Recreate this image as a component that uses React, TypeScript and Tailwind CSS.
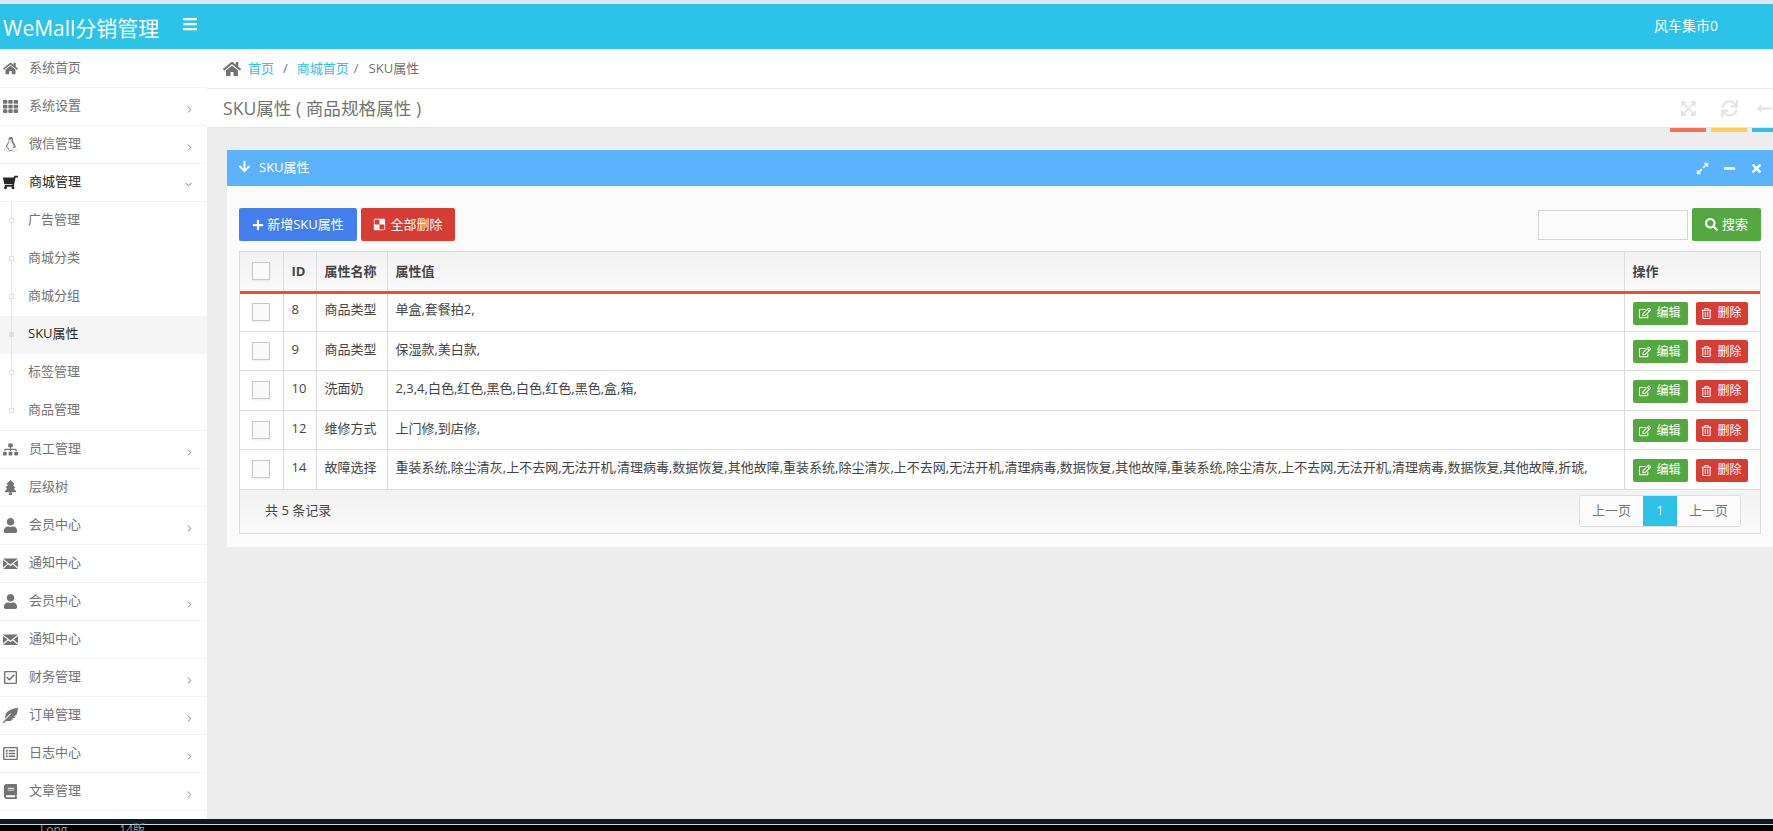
import React from 'react';
import {
  FaHome, FaTh, FaLinux, FaShoppingCart, FaSitemap, FaTree, FaUser,
  FaRegCheckSquare, FaFeatherAlt, FaRegListAlt, FaBook, FaBars, FaExpandArrowsAlt, FaSync,
  FaLongArrowAltLeft, FaArrowDown, FaExpandAlt, FaMinus, FaTimes, FaPlus, FaDelicious,
  FaSearch, FaRegEdit, FaRegTrashAlt,
} from 'react-icons/fa';
import { ChevronDown, ChevronRight } from 'lucide-react';

// closed envelope with the flap lines cut out, the icon font's shape
const MailIcon = () => (
  <svg width="15" height="11" viewBox="0 0 15 11" fill="currentColor">
    <path d="M0 0.5h15L7.5 6.5z" />
    <path d="M0 2v7.5L4.5 5.6z" />
    <path d="M15 2v7.5L10.5 5.6z" />
    <path d="M0 11h15L9.7 6.5 7.5 8.2 5.3 6.5z" />
  </svg>
);

const menuBefore = [
  { label: '系统首页', icon: FaHome, arrow: false },
  { label: '系统设置', icon: FaTh, arrow: true },
  { label: '微信管理', icon: FaLinux, arrow: true },
];

const subMenu = ['广告管理', '商城分类', '商城分组', 'SKU属性', '标签管理', '商品管理'];

const menuAfter = [
  { label: '员工管理', icon: FaSitemap, arrow: true },
  { label: '层级树', icon: FaTree, arrow: false },
  { label: '会员中心', icon: FaUser, arrow: true },
  { label: '通知中心', icon: MailIcon, arrow: false },
  { label: '会员中心', icon: FaUser, arrow: true },
  { label: '通知中心', icon: MailIcon, arrow: false },
  { label: '财务管理', icon: FaRegCheckSquare, arrow: true },
  { label: '订单管理', icon: FaFeatherAlt, arrow: true },
  { label: '日志中心', icon: FaRegListAlt, arrow: true },
  { label: '文章管理', icon: FaBook, arrow: true },
];

const rows = [
  { id: 8, name: '商品类型', value: '单盒,套餐拍2,', h: 'h-[39px]', pad: 'pb-[4px]' },
  { id: 9, name: '商品类型', value: '保湿款,美白款,', h: 'h-[39px]', pad: 'pb-[2px]' },
  { id: 10, name: '洗面奶', value: '2,3,4,白色,红色,黑色,白色,红色,黑色,盒,箱,', h: 'h-[40px]', pad: 'pb-[3px]' },
  { id: 12, name: '维修方式', value: '上门修,到店修,', h: 'h-[39px]', pad: 'pb-[2px]' },
  {
    id: 14,
    name: '故障选择',
    value:
      '重装系统,除尘清灰,上不去网,无法开机,清理病毒,数据恢复,其他故障,重装系统,除尘清灰,上不去网,无法开机,清理病毒,数据恢复,其他故障,重装系统,除尘清灰,上不去网,无法开机,清理病毒,数据恢复,其他故障,折琥,',
    h: 'h-[40px]',
    pad: 'pb-[3px]',
  },
];

const MenuRow = ({ item, active }: { item: { label: string; icon: React.ElementType; arrow: boolean }; active?: boolean }) => {
  const Icon = item.icon;
  return (
    <div className={`flex h-[38px] shrink-0 items-center border-b border-[#f3f3f3] ${active ? 'text-[#262626]' : 'text-[#737373]'}`}>
      <span className="flex w-[29px] shrink-0 justify-center pr-[9px] text-[15px]">
        <Icon />
      </span>
      <span className="pb-[2px]">{item.label}</span>
      {item.arrow && <ChevronRight size={11} strokeWidth={2} className="ml-auto mr-[12px] mt-[5px]" />}
    </div>
  );
};

const Checkbox = () => (
  <span className="block h-[18px] w-[18px] border border-[#c8c8c8] bg-[#fafafa] shadow-[0_1px_2px_rgba(0,0,0,0.08)]" />
);

export default function App() {
  return (
    <div className="flex h-[831px] flex-col overflow-hidden bg-[#ededed] font-['Open_Sans','Noto_Sans_CJK_SC',sans-serif] text-[13px]">
      <div className="h-[4px] shrink-0 bg-[#dbe7f3]" />

      {/* Header */}
      <header className="flex h-[45px] shrink-0 items-center bg-[#2dc3e8] text-white">
        <span className="ml-[3px] mt-[3px] text-[21px] leading-none">WeMall分销管理</span>
        <FaBars className="ml-[23px] mt-[-5px] text-[16px]" />
        <span className="ml-auto mr-[55px] mt-[-3px] text-[14px]">风车集市0</span>
      </header>

      <div className="flex min-h-0 flex-1">
        {/* Sidebar */}
        <aside className="flex w-[207px] shrink-0 flex-col overflow-hidden bg-white pt-px">
          {menuBefore.map((item) => (
            <MenuRow key={item.label} item={item} />
          ))}
          <div className="flex h-[38px] shrink-0 items-center border-b border-[#f3f3f3] text-[#262626]">
            <span className="flex w-[29px] shrink-0 justify-center pr-[9px] text-[15px]">
              <FaShoppingCart className="-scale-x-100" />
            </span>
            <span className="pb-[2px]">商城管理</span>
            <ChevronDown size={11} strokeWidth={2} className="ml-auto mr-[13px] mt-[3px] text-[#737373]" />
          </div>
          <div className="relative shrink-0 border-b border-[#f3f3f3]">
            {subMenu.map((label) => {
              const active = label === 'SKU属性';
              return (
                <div
                  key={label}
                  className={`relative flex h-[38px] items-center pb-[2px] pl-[28px] ${active ? 'bg-[#f5f5f5] text-[#262626]' : 'text-[#737373]'}`}
                >
                  <span className={`absolute left-[9px] top-[16px] z-10 h-[5px] w-[5px] border border-[#e0e0e0] ${active ? 'bg-[#e0e0e0]' : 'bg-white'}`} />
                  {label}
                </div>
              );
            })}
            <span className="absolute bottom-[19px] left-[11px] top-0 w-px bg-[#e5e5e5]" />
          </div>
          {menuAfter.map((item, i) => (
            <MenuRow key={i} item={item} />
          ))}
        </aside>

        {/* Main */}
        <main className="flex min-w-0 flex-1 flex-col">
          <div className="flex h-[40px] shrink-0 items-center border-b border-[#e9e9e9] bg-white pl-[16px] text-[#737373]">
            <FaHome className="mr-[7px] text-[18px]" />
            <span className="text-[#2dc3e8]">首页</span>
            <span className="mx-[9px]">/</span>
            <span className="text-[#2dc3e8]">商城首页</span>
            <span className="ml-[5px] mr-[10px]">/</span>
            <span>SKU属性</span>
          </div>

          <div className="flex h-[39px] shrink-0 items-center border-b border-[#e5e5e5] bg-white pl-[16px] text-[#737373]">
            <span className="text-[17.6px]">SKU属性 ( 商品规格属性 )</span>
            <div className="-mb-[4px] ml-auto flex h-[43px] gap-[5px] self-start overflow-visible">
              <div className="flex w-[36px] items-center justify-center border-b-4 border-[#fb6e52] text-[17px] text-[#e5e5e5]">
                <FaExpandArrowsAlt />
              </div>
              <div className="flex w-[36px] items-center justify-center border-b-4 border-[#ffce55] text-[17px] text-[#e5e5e5]">
                <FaSync />
              </div>
              <div className="flex w-[21px] items-center justify-end overflow-hidden border-b-4 border-[#2dc3e8] text-[17px] text-[#e5e5e5]">
                <FaLongArrowAltLeft className="shrink-0" />
              </div>
            </div>
          </div>

          <div className="pl-[20px] pt-[22px]">
            <section className="bg-[#fbfbfb]">
              <div className="flex h-[36px] items-center bg-[#5db2ff] pl-[11px] pr-[10px] text-white">
                <FaArrowDown className="mr-[8px] mt-[-3px] text-[13px]" />
                <span>SKU属性</span>
                <div className="ml-auto flex items-center gap-[14px] text-[13px]">
                  <FaExpandAlt />
                  <FaMinus />
                  <FaTimes />
                </div>
              </div>

              <div className="pb-[13px] pl-[12px] pr-[12px] pt-[22px]">
                <div className="flex h-[33px] items-center gap-[4px] text-white">
                  <button className="flex h-[33px] w-[118px] items-center justify-center gap-[3px] rounded-[2px] bg-[#427fed]">
                    <FaPlus className="text-[12px]" />
                    新增SKU属性
                  </button>
                  <button className="flex h-[33px] w-[94px] items-center justify-center gap-[4px] rounded-[2px] bg-[#d73d32]">
                    <FaDelicious className="text-[13px]" />
                    全部删除
                  </button>
                  <input className="ml-auto h-[30px] w-[150px] border border-[#d5d5d5] bg-[#fbfbfb]" />
                  <button className="flex h-[33px] w-[69px] items-center justify-center gap-[4px] rounded-[2px] bg-[#53a93f]">
                    <FaSearch className="text-[13px]" />
                    搜索
                  </button>
                </div>

                <div className="mt-[10px] border border-[#dddddd]">
                  <table className="w-full table-fixed border-collapse text-[#444444]">
                    <colgroup>
                      <col className="w-[43px]" />
                      <col className="w-[33px]" />
                      <col className="w-[71px]" />
                      <col />
                      <col className="w-[136px]" />
                    </colgroup>
                    <thead>
                      <tr className="h-[40px] border-b-[3px] border-[#e9502a] bg-[linear-gradient(to_bottom,#f2f2f2,#fafafa)] font-bold">
                        <th className="border-r border-[#dddddd] px-[12px] text-left">
                          <Checkbox />
                        </th>
                        <th className="border-r border-[#dddddd] pl-[8px] text-left">ID</th>
                        <th className="border-r border-[#dddddd] pl-[8px] text-left">属性名称</th>
                        <th className="border-r border-[#dddddd] pl-[8px] text-left">属性值</th>
                        <th className="pl-[8px] text-left">操作</th>
                      </tr>
                    </thead>
                    <tbody className="bg-white">
                      {rows.map((row) => (
                        <tr key={row.id} className={`${row.h} border-b border-[#dddddd]`}>
                          <td className="border-r border-[#dddddd] px-[12px]">
                            <Checkbox />
                          </td>
                          <td className={`border-r border-[#dddddd] pl-[8px] ${row.pad}`}>{row.id}</td>
                          <td className={`border-r border-[#dddddd] pl-[8px] ${row.pad}`}>{row.name}</td>
                          <td className={`border-r border-[#dddddd] pl-[8px] whitespace-nowrap ${row.pad}`}>{row.value}</td>
                          <td className="pl-[8px] pt-[2px]">
                            <div className="flex gap-[8px] text-[12px] text-white">
                              <button className="flex h-[23px] w-[55px] items-center justify-center gap-[5px] rounded-[2px] bg-[#53a93f]">
                                <FaRegEdit className="text-[12px]" />
                                编辑
                              </button>
                              <button className="flex h-[23px] w-[52px] items-center justify-center gap-[5px] rounded-[2px] bg-[#d73d32]">
                                <FaRegTrashAlt className="text-[11px]" />
                                删除
                              </button>
                            </div>
                          </td>
                        </tr>
                      ))}
                    </tbody>
                  </table>
                  <div className="flex h-[43px] items-center bg-[linear-gradient(to_bottom,#f2f2f2,#fafafa)] pl-[25px] pr-[19px] text-[#444444]">
                    <span>共 5 条记录</span>
                    <div className="ml-auto flex h-[32px] overflow-hidden rounded-[3px] border border-[#dddddd] text-[#777777]">
                      <span className="flex w-[63px] items-center justify-center bg-[#fbfbfb]">上一页</span>
                      <span className="flex w-[34px] items-center justify-center bg-[#2dc3e8] text-white">1</span>
                      <span className="flex w-[63px] items-center justify-center bg-[#fbfbfb]">上一页</span>
                    </div>
                  </div>
                </div>
              </div>
            </section>
          </div>
        </main>
      </div>

      {/* Desktop strip below the window */}
      <div className="h-[12px] shrink-0 overflow-hidden bg-black">
        <div className="h-[5px] bg-[#0d1a24]" />
        <div className="h-px bg-[#d8d8d8]" />
        <div className="flex h-[6px] items-start text-[12px] leading-[10px] text-[#9a9a9a]">
          <span className="ml-[40px]">Long</span>
          <span className="ml-[52px]">14版</span>
        </div>
      </div>
    </div>
  );
}
